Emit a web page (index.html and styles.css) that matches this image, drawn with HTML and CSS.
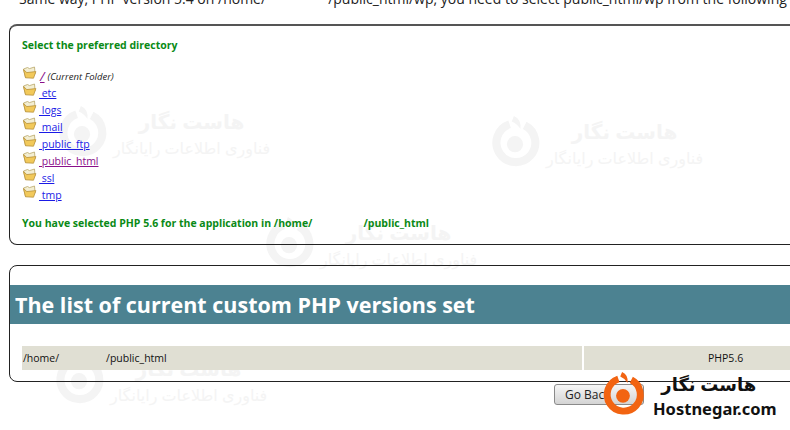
FILE: index.html
```html
<!DOCTYPE html>
<html lang="en">
<head>
<meta charset="utf-8">
<title>PHP versions</title>
<link rel="stylesheet" href="styles.css">
</head>
<body>
<svg class="defs" width="0" height="0" aria-hidden="true">
  <defs>
    <symbol id="folder" viewBox="0 0 14 14">
      <path d="M1 3 L5 1.5 L7 2.6 L12 1 L12.6 8 L3 11.5 Z" fill="#f3eed2" stroke="#b9a76a" stroke-width=".8"/>
      <path d="M1 3.6 L3 11.8 L11 12.2 L13.4 5.6 L4 6.6 L2.8 5 Z" fill="#f2c95a" stroke="#b8923c" stroke-width=".8"/>
    </symbol>
    <symbol id="ring" viewBox="0 0 50 50">
      <path d="M20 8.6 A18 18 0 1 0 34 9.6" fill="none" stroke="currentColor" stroke-width="7.5"/>
      <path d="M24 1 Q31 4 30 13 Q27 8 22 6 Z" fill="currentColor"/>
      <circle cx="25" cy="27" r="7.5" fill="currentColor"/>
    </symbol>
  </defs>
</svg>

<div class="mark mark-a"><svg class="mark-ring"><use href="#ring"/></svg><div class="mark-text"><b>هاست نگار</b><span>فناوری اطلاعات رایانگار</span></div></div>
<div class="mark mark-b"><svg class="mark-ring"><use href="#ring"/></svg><div class="mark-text"><b>هاست نگار</b><span>فناوری اطلاعات رایانگار</span></div></div>
<div class="mark mark-c"><svg class="mark-ring"><use href="#ring"/></svg><div class="mark-text"><b>هاست نگار</b><span>فناوری اطلاعات رایانگار</span></div></div>
<div class="mark mark-d"><svg class="mark-ring"><use href="#ring"/></svg><div class="mark-text"><b>هاست نگار</b><span>فناوری اطلاعات رایانگار</span></div></div>

<main class="page">
  <p class="intro">Same way, PHP version 5.4 on /home/<span class="gap-intro"></span>/public_html/wp, you need to select public_html/wp from the following</p>

  <section class="box box-dirs">
    <h3 class="note">Select the preferred directory</h3>
    <ul class="dirs">
      <li><svg class="folder"><use href="#folder"/></svg><a class="visited root" href="#">/</a> <em>(Current Folder)</em></li>
      <li><svg class="folder"><use href="#folder"/></svg><a href="#">&nbsp;etc</a></li>
      <li><svg class="folder"><use href="#folder"/></svg><a href="#">&nbsp;logs</a></li>
      <li><svg class="folder"><use href="#folder"/></svg><a href="#">&nbsp;mail</a></li>
      <li><svg class="folder"><use href="#folder"/></svg><a href="#">&nbsp;public_ftp</a></li>
      <li><svg class="folder"><use href="#folder"/></svg><a class="visited" href="#">&nbsp;public_html</a></li>
      <li><svg class="folder"><use href="#folder"/></svg><a href="#">&nbsp;ssl</a></li>
      <li><svg class="folder"><use href="#folder"/></svg><a href="#">&nbsp;tmp</a></li>
    </ul>
    <p class="note selected">You have selected PHP 5.6 for the application in /home/<span class="gap-sel"></span>/public_html</p>
  </section>

  <section class="box box-list">
    <h2 class="band">The list of current custom PHP versions set</h2>
    <div class="row">
      <div class="cell cell-path">/home/<span class="gap-row"></span>/public_html</div>
      <div class="cell cell-ver">PHP5.6</div>
    </div>
  </section>

  <button class="back" type="button">Go Back</button>
</main>

<div class="logo">
  <svg class="logo-ring"><use href="#ring"/></svg>
  <div class="logo-text"><span class="logo-fa">هاست نگار</span><span class="logo-en">Hostnegar.com</span></div>
</div>
</body>
</html>
```

FILE: styles.css
```css
html, body {
  margin: 0;
  padding: 0;
  width: 790px;
  height: 430px;
  overflow: hidden;
  background: #fff;
}
body {
  position: relative;
  font-family: "Open Sans", "Noto Sans", sans-serif;
  color: #111;
}
.defs { position: absolute; }
.page {
  width: 1000px;
  display: flex;
  flex-direction: column;
  align-items: flex-start;
  padding-left: 9px;
  position: relative;
}
.intro {
  margin: -11px 0 0 10px;
  height: 35px;
  font-size: 14px;
  line-height: 19px;
  color: #222;
  white-space: nowrap;
}
.gap-intro { display: inline-block; width: 62px; }
.box {
  box-sizing: border-box;
  width: 1000px;
  border: 1px solid #222;
  border-radius: 8px;
}
.box-dirs {
  height: 221px;
  border-top: 2px solid #555;
  padding: 12px 12px 0;
}
.note {
  margin: 0;
  font-size: 10.5px;
  line-height: 15px;
  font-weight: 700;
  color: #0a8a16;
  white-space: nowrap;
}
.dirs {
  list-style: none;
  margin: 14px 0 0;
  padding: 0;
  display: flex;
  flex-direction: column;
  gap: 0;
}
.dirs li {
  height: 17px;
  display: flex;
  align-items: flex-start;
  font-size: 10.5px;
  line-height: 18px;
  white-space: nowrap;
}
.folder {
  width: 15px;
  height: 14px;
  margin-top: -1px;
  margin-right: 2px;
  flex: none;
}
.dirs a { color: #1a1ae6; text-decoration: underline; white-space: pre; }
.dirs a.visited { color: #8a0f8a; }
.dirs a.root { font-size: 13px; font-style: italic; margin-left: 1px; }
.dirs em { font-size: 9.5px; color: #222; margin-left: 3px; line-height: 20px; }
.selected { margin-top: 13px; }
.gap-sel { display: inline-block; width: 51px; }
.box-list {
  height: 117px;
  margin-top: 20px;
  padding-top: 19px;
}
.band {
  margin: 0;
  height: 39px;
  box-sizing: border-box;
  padding-left: 5px;
  background: #4c8291;
  color: #fff;
  font-size: 21.5px;
  line-height: 39px;
  font-weight: 700;
  white-space: nowrap;
}
.row {
  display: flex;
  gap: 2px;
  margin: 22px 0 0 12px;
  height: 24px;
}
.cell {
  background: #e0dfd3;
  font-size: 10.5px;
  line-height: 24px;
  color: #111;
  white-space: nowrap;
}
.cell-path { width: 560px; box-sizing: border-box; padding-left: 1px; }
.cell-ver { width: 300px; box-sizing: border-box; padding-left: 124px; }
.gap-row { display: inline-block; width: 47px; }
.back {
  margin: 2px 0 0 545px;
  width: 90px;
  height: 21px;
  box-sizing: border-box;
  padding: 0 0 0 10px;
  text-align: left;
  border: 1px solid #8a8a8a;
  border-radius: 3px;
  background: linear-gradient(#f6f6f6, #d4d4d4);
  font-family: "Open Sans", sans-serif;
  font-size: 12px;
  color: #222;
}
.mark {
  position: absolute;
  display: flex;
  align-items: center;
  gap: 4px;
  color: #f4f4f4;
}
.mark-a { left: 55px; top: 103px; }
.mark-b { left: 488px; top: 113px; }
.mark-c { left: 262px; top: 214px; }
.mark-d { left: 52px; top: 350px; }
.mark-ring { width: 54px; height: 54px; }
.mark-text {
  display: flex;
  flex-direction: column;
  align-items: center;
  font-family: "Noto Sans", "DejaVu Sans", sans-serif;
  line-height: 26px;
  margin-top: 6px;
}
.mark-text b { font-size: 20px; }
.mark-text span { font-size: 16px; }
.logo {
  position: absolute;
  left: 600px;
  top: 370px;
  display: flex;
  gap: 7px;
}
.logo-ring { width: 46px; height: 48px; color: #f26412; }
.logo-text {
  display: flex;
  flex-direction: column;
  align-items: center;
  color: #111;
  font-family: "Noto Sans", "DejaVu Sans", sans-serif;
  font-weight: 700;
}
.logo-fa { font-size: 18px; line-height: 28px; margin-left: -12px; }
.logo-en { font-size: 16.5px; line-height: 22px; }
```
